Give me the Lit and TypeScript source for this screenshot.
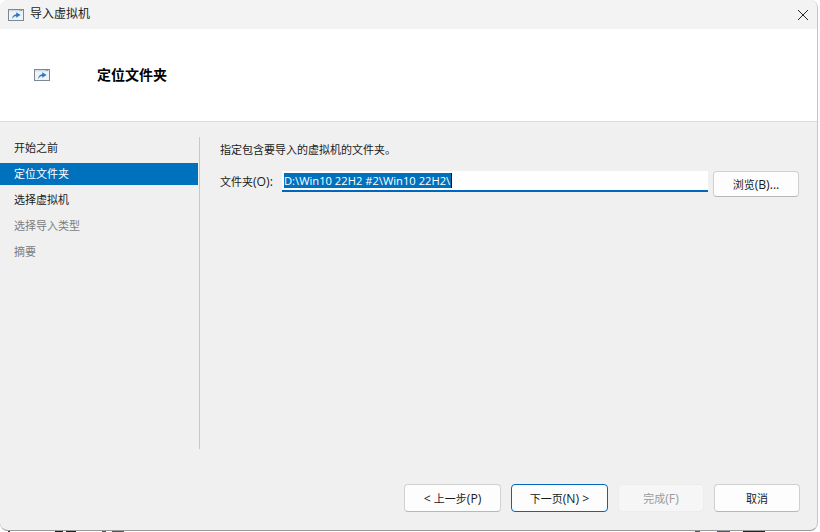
import { LitElement, html, css } from "lit";
import { customElement } from "lit/decorators.js";

const icon = html`<svg class="ico" width="16" height="12" viewBox="0 0 16 12">
  <rect x="0.5" y="0.5" width="15" height="11" fill="#eef3f9" stroke="#7f8790"/>
  <rect x="1" y="1" width="14" height="1.4" fill="#d5dce4"/>
  <rect x="11.5" y="1" width="1" height="1" fill="#8a929b"/><rect x="13" y="1" width="1" height="1" fill="#8a929b"/>
  <path d="M4 10 C4.2 7.4 5.8 5.6 8.2 5.2 V3.2 L12.6 6 L8.2 8.8 V7 C6.6 7 5.2 8 4 10 Z" fill="#2f78c4"/>
</svg>`;

@customElement("app-root")
export class AppRoot extends LitElement {
  static styles = css`
    :host { display: block; width: 820px; height: 532px; overflow: hidden;
      background-color: #fdfdfd;
      background-image: linear-gradient(90deg,
        transparent 8px, #333 8px, #333 10px, transparent 10px,
        transparent 55px, #222 55px, #222 63px, transparent 63px,
        transparent 66px, #222 66px, #222 76px, transparent 76px,
        transparent 102px, #555 102px, #555 106px, transparent 106px,
        transparent 112px, #555 112px, #555 124px, transparent 124px,
        transparent 695px, #555 695px, #555 700px, transparent 700px,
        transparent 717px, #556 717px, #556 730px, transparent 730px,
        transparent 743px, #222 743px, #222 765px, transparent 765px);
      background-size: 100% 1px; background-position: 0 100%; background-repeat: no-repeat;
      font-family: "Open Sans", "Noto Sans CJK SC", sans-serif; font-size: 11px; color: #1b1b1b; }
    .window { width: 818px; height: 531px; box-sizing: border-box; display: flex; flex-direction: column;
      background: #f0f0f0; border-radius: 8px; border-right: 1px solid #c4c4c4; border-bottom: 1px solid #9a9a9a; overflow: hidden; }
    .title { height: 29px; flex: none; background: #f3f3f3; display: flex; align-items: center; padding-left: 8px; gap: 6px; font-size: 12px; }
    .title span { line-height: 14px; margin-bottom: 2px; }
    .close { margin-left: auto; margin-right: 8px; width: 12px; height: 12px; display: block; }
    .header { height: 92px; flex: none; background: #fff; border-bottom: 1px solid #dcdcdc;
      display: flex; align-items: center; padding-left: 34px; }
    .header h1 { margin: 0 0 0 47px; font-size: 14px; font-weight: 700; color: #000; line-height: 18px; }
    .body { flex: 1; min-height: 0; display: flex; padding: 15px 0; }
    nav { width: 198px; flex: none; display: flex; flex-direction: column; gap: 4px; }
    nav div { height: 22px; line-height: 21px; padding-left: 14px; }
    nav .sel { background: #0071bd; color: #fff; }
    nav .dis { color: #7d7d7d; }
    .content { flex: 1; margin-left: 1px; border-left: 1px solid #c8c8c8; padding: 4px 19px 0 20px; }
    .hint { line-height: 18px; }
    .row { display: flex; align-items: flex-start; margin-top: 12px; }
    .row label { width: 62px; flex: none; line-height: 22px; }
    .l { font-size: 12.2px; }
    .input { width: 426px; height: 21px; box-sizing: border-box; background: #fff; border-bottom: 2px solid #0067c0; padding: 2px 0 0 2px; flex: none; }
    .input .sel-text { display: block; width: fit-content; height: 15px; line-height: 15px; background: #0071bd; color: #fff; padding-right: 1px;
      font-size: 11.2px; white-space: nowrap; border-right: 1px solid #111; }
    button { box-sizing: border-box; font: inherit; color: #1b1b1b; background: #fdfdfd; border: 1px solid #d0d0d0; border-bottom-color: #b8b8b8; border-radius: 4px; padding: 0; display: block; }
    .browse { width: 86px; height: 26px; margin-left: 5px; }
    footer { height: 66px; flex: none; display: flex; padding: 20px 0 0 404px; gap: 10px; box-sizing: border-box; }
    footer button { height: 28px; width: 97px; }
    footer .primary { border-color: #0067c0; }
    footer .dim { width: 86px; background: #f6f6f6; border-color: #ececec; color: #9a9a9a; }
    footer .cancel { width: 86px; }
  `;
  render() {
    return html`<div class="window">
      <div class="title">${icon}<span>导入虚拟机</span>
        <svg class="close" viewBox="0 0 12 12"><path d="M1 1 L11 11 M11 1 L1 11" stroke="#222" stroke-width="1" fill="none"/></svg>
      </div>
      <div class="header">${icon}<h1>定位文件夹</h1></div>
      <div class="body">
        <nav>
          <div>开始之前</div>
          <div class="sel">定位文件夹</div>
          <div>选择虚拟机</div>
          <div class="dis">选择导入类型</div>
          <div class="dis">摘要</div>
        </nav>
        <div class="content">
          <div class="hint">指定包含要导入的虚拟机的文件夹。</div>
          <div class="row">
            <label>文件夹<span class="l">(O):</span></label>
            <div class="input"><span class="sel-text">D:\\Win10 22H2 #2\\Win10 22H2\\</span></div>
            <button class="browse">浏览<span class="l">(B)...</span></button>
          </div>
        </div>
      </div>
      <footer>
        <button><span class="l">&lt; </span>上一步<span class="l">(P)</span></button>
        <button class="primary">下一页<span class="l">(N) &gt;</span></button>
        <button class="dim">完成<span class="l">(F)</span></button>
        <button class="cancel">取消</button>
      </footer>
    </div>`;
  }
}
